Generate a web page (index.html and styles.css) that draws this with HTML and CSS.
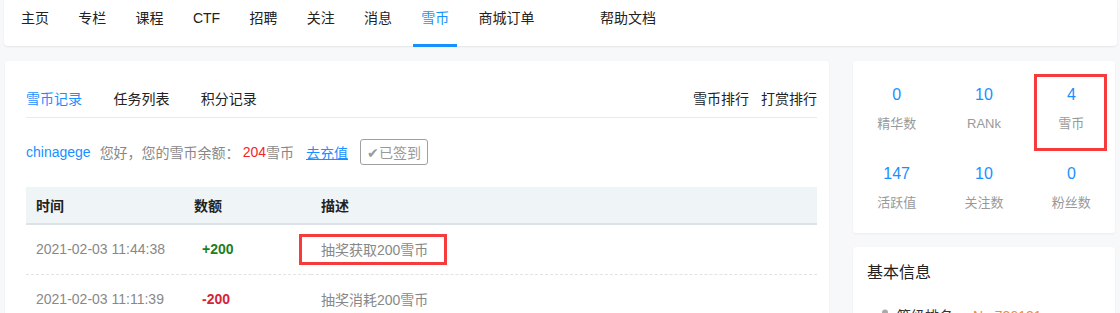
FILE: index.html
```html
<!DOCTYPE html>
<html lang="zh-CN">
<head>
    <meta charset="UTF-8">
    <title>雪币</title>
    <link rel="stylesheet" href="styles.css">
</head>
<body>
    <nav class="topnav">
        <a class="nav-item">主页</a>
        <a class="nav-item">专栏</a>
        <a class="nav-item">课程</a>
        <a class="nav-item">CTF</a>
        <a class="nav-item">招聘</a>
        <a class="nav-item">关注</a>
        <a class="nav-item">消息</a>
        <a class="nav-item active">雪币</a>
        <a class="nav-item wide">商城订单</a>
        <a class="nav-item">帮助文档</a>
    </nav>

    <div class="page">
        <main class="card main-card">
            <div class="tabs">
                <div class="tab-group">
                    <a class="tab active">雪币记录</a>
                    <a class="tab">任务列表</a>
                    <a class="tab">积分记录</a>
                </div>
                <div class="rank-links">
                    <a>雪币排行</a>
                    <a>打赏排行</a>
                </div>
            </div>

            <div class="balance">
                <span class="user">chinagege</span>
                <span class="muted">您好，您的雪币余额：</span>
                <span class="amount">204</span><span class="muted">雪币</span>
                <a class="recharge">去充值</a>
                <button class="sign-btn">✔已签到</button>
            </div>

            <table class="records">
                <thead>
                    <tr>
                        <th class="col-time">时间</th>
                        <th class="col-num">数额</th>
                        <th>描述</th>
                    </tr>
                </thead>
                <tbody>
                    <tr>
                        <td>2021-02-03 11:44:38</td>
                        <td class="num plus">+200</td>
                        <td><span class="marked">抽奖获取200雪币</span></td>
                    </tr>
                    <tr>
                        <td>2021-02-03 11:11:39</td>
                        <td class="num minus">-200</td>
                        <td>抽奖消耗200雪币</td>
                    </tr>
                </tbody>
            </table>
        </main>

        <aside class="side">
            <div class="card stats">
                <div class="stat"><span class="stat-num">0</span><span class="stat-label">精华数</span></div>
                <div class="stat"><span class="stat-num">10</span><span class="stat-label">RANk</span></div>
                <div class="stat marked-box"><span class="stat-num">4</span><span class="stat-label">雪币</span></div>
                <div class="stat"><span class="stat-num">147</span><span class="stat-label">活跃值</span></div>
                <div class="stat"><span class="stat-num">10</span><span class="stat-label">关注数</span></div>
                <div class="stat"><span class="stat-num">0</span><span class="stat-label">粉丝数</span></div>
            </div>

            <div class="card info">
                <h3>基本信息</h3>
                <div class="info-row">
                    <svg width="12" height="14" viewBox="0 0 12 14"><circle cx="6" cy="3.5" r="3" fill="#aaa"/><path d="M0 14c0-4 2.7-6 6-6s6 2 6 6z" fill="#ccc"/></svg>
                    <span class="info-key">等级排名</span>
                    <span class="info-val">No.736121</span>
                </div>
            </div>
        </aside>
    </div>
</body>
</html>
```

FILE: styles.css
```css
/* Reset */
* {
    margin: 0;
    padding: 0;
    box-sizing: border-box;
}

body {
    background: #f7f8fa;
    font-family: "Liberation Sans", "Noto Sans CJK SC", sans-serif;
    font-size: 14px;
    color: #333;
    overflow: hidden;
}

a {
    cursor: pointer;
}

/* Top navigation */
.topnav {
    display: flex;
    gap: 13.3px;
    height: 46px;
    margin: 0 3px 0 4px;
    padding-left: 9px;
    background: #fff;
    border-radius: 0 0 4px 4px;
    box-shadow: 0 1px 2px rgba(0, 0, 0, 0.08);
}

.nav-item {
    height: 47px;
    padding: 0 8px;
    line-height: 37px;
    border-bottom: 3px solid transparent;
    color: #222;
}

.nav-item.active {
    color: #1890ff;
    border-bottom-color: #1890ff;
}

.nav-item.wide {
    margin-right: 36px;
}

/* Layout */
.page {
    display: flex;
    gap: 24px;
    margin-top: 15px;
    padding-left: 5px;
}

.card {
    background: #fff;
    border-radius: 3px;
    box-shadow: 0 1px 3px rgba(0, 0, 0, 0.05);
}

.main-card {
    width: 824px;
    height: 280px;
    padding: 28px 12px 0 21px;
}

/* Tabs */
.tabs {
    display: flex;
    justify-content: space-between;
    line-height: 20px;
    padding-bottom: 8px;
    border-bottom: 1px solid #eaeaea;
}

.tab {
    margin-right: 27.5px;
    color: #222;
}

.tab.active {
    color: #1890ff;
}

.rank-links {
    display: flex;
    gap: 12px;
    color: #222;
}

/* Balance line */
.balance {
    display: flex;
    align-items: center;
    height: 26px;
    margin-top: 21px;
}

.user {
    color: #1890ff;
    margin-right: 9px;
}

.muted {
    color: #888;
}

.amount {
    color: #f5222d;
    margin-left: 3px;
}

.recharge {
    color: #1890ff;
    text-decoration: underline;
    margin-left: 12px;
}

.sign-btn {
    height: 26px;
    margin-left: 12px;
    padding: 0 6px;
    background: #fff;
    border: 1px solid #a0a0a0;
    border-radius: 3px;
    color: #999;
    font: inherit;
}

/* Records table */
.records {
    width: 100%;
    margin-top: 22px;
    border-collapse: collapse;
}

.records th {
    height: 37px;
    padding-left: 10px;
    text-align: left;
    font-weight: bold;
    color: #222;
    background: #eff4f7;
    border-bottom: 2px solid #dde2e8;
}

.records th.col-time {
    width: 158px;
}

.records th.col-num {
    width: 127px;
}

.records td {
    height: 50px;
    padding-left: 10px;
    color: #888;
    border-bottom: 1px dashed #e3e3e3;
}

.records td.num {
    padding-left: 18px;
    font-weight: bold;
}

.plus {
    color: #1d7e24 !important;
}

.minus {
    color: #d4243a !important;
}

/* Red annotation boxes */
.marked {
    position: relative;
}

.marked::after {
    content: "";
    position: absolute;
    left: -22px;
    right: -19px;
    top: -8px;
    bottom: -7px;
    border: 3px solid #f53b3b;
}

.marked-box {
    position: relative;
}

.marked-box::after {
    content: "";
    position: absolute;
    left: 6px;
    right: 8px;
    top: -9px;
    bottom: -17px;
    border: 3px solid #f53b3b;
}

/* Side column */
.side {
    width: 262px;
    display: flex;
    flex-direction: column;
    gap: 14px;
}

.stats {
    display: grid;
    grid-template-columns: repeat(3, 1fr);
    row-gap: 28px;
    padding: 22px 0 20px;
}

.stat {
    display: flex;
    flex-direction: column;
    align-items: center;
}

.stat-num {
    font-size: 16px;
    line-height: 24px;
    color: #1890ff;
}

.stat-label {
    margin-top: 7px;
    font-size: 13px;
    line-height: 20px;
    color: #999;
}

.info {
    height: 120px;
    padding: 16px 14px 0;
}

.info h3 {
    font-size: 16px;
    font-weight: normal;
    line-height: 20px;
    color: #222;
}

.info-row {
    display: flex;
    align-items: center;
    gap: 6px;
    margin-top: 23px;
    padding-left: 12px;
    line-height: 20px;
}

.info-key {
    color: #333;
    margin-right: 14px;
}

.info-val {
    color: #fa8c16;
}
```
